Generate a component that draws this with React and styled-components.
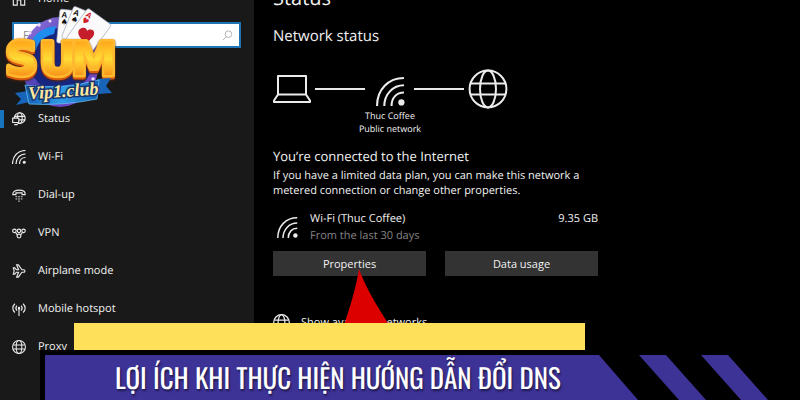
import React from 'react'
import styled, { createGlobalStyle } from 'styled-components'

const GlobalStyle = createGlobalStyle`
  * { box-sizing: border-box; }
  body {
    margin: 0;
    background: #000;
    color: #f2f2f2;
    font: 11px/16px "Open Sans", "Noto Sans", sans-serif;
    text-rendering: geometricPrecision;
  }
`

const Screen = styled.div`
  position: relative;
  height: 100vh;
  overflow: hidden;
`

// both columns are scrolled down by one nav row
const Columns = styled.div`
  display: flex;
  min-height: calc(100% + 20px);
  margin-top: -20px;
`

const Sidebar = styled.nav`
  flex: 0 0 254px;
  background: #191919;
`

const NavLink = styled.a`
  display: flex;
  align-items: center;
  gap: 12px;
  height: 38px;
  padding-left: 12px;
  color: #f2f2f2;
  text-decoration: none;

  &::before {
    content: '';
    width: 4px;
    height: 18px;
    margin-left: -12px;
    margin-right: -4px;
    background: ${({ $active }) => ($active ? '#1a73bd' : 'transparent')};
  }
`

const SearchBox = styled.label`
  display: flex;
  align-items: center;
  height: 26px;
  margin: 4px 13px 52px 12px;
  padding: 0 6px 0 9px;
  background: #fff;
  border: 2px solid #1f74b5;
`

const SearchInput = styled.input`
  flex: 1;
  min-width: 0;
  padding: 0;
  border: 0;
  outline: 0;
  background: none;
  font: inherit;
  color: #222;

  &::placeholder { color: #888; }
`

const Main = styled.main`
  flex: 1;
  min-width: 0;
  padding: 0 19px;
`

const Content = styled.div`
  max-width: 325px;
`

const PageTitle = styled.h1`
  margin: 0;
  padding-top: 4px;
  font-size: 20px;
  font-weight: 400;
  line-height: 28px;
`

const Heading = styled.h2`
  margin: 14px 0 0;
  font-size: 15px;
  font-weight: 400;
  line-height: 20px;
`

const Diagram = styled.div`
  display: flex;
  align-items: center;
  gap: 4px;
  height: 40px;
  margin-top: 23px;
`

const Link = styled.span`
  width: 50px;
  height: 2px;
  background: #e8e8e8;
`

const DiagramWifi = styled.span`
  display: flex;
  padding: 4px 5px 0 7px;
`

const Caption = styled.p`
  width: 234px;
  margin: 0;
  font-size: 9px;
  line-height: 13px;
  text-align: center;
`

const SubHeading = styled.h3`
  margin: 11px 0 0;
  font-size: 13px;
  font-weight: 400;
  line-height: 20px;
`

const Note = styled.p`
  margin: 2px -12px 0 0;
  line-height: 15px;
`

const Usage = styled.div`
  display: flex;
  align-items: center;
  gap: 12px;
  margin-top: 12px;
  padding-left: 4px;
  line-height: 17px;
`

const UsageText = styled.div`
  flex: 1;
`

const Muted = styled.div`
  color: #858585;
`

const Amount = styled.div`
  align-self: flex-start;
`

const Actions = styled.div`
  display: grid;
  grid-template-columns: 1fr 1fr;
  gap: 19px;
  margin-top: 7px;
`

const Action = styled.div`
  position: relative;
`

const Button = styled.button`
  width: 100%;
  height: 25px;
  padding: 0;
  border: 0;
  background: #333;
  color: #f2f2f2;
  font: inherit;
`

const Pointer = styled.svg`
  position: absolute;
  z-index: 1;
  top: 18px;
  left: 66px;
`

const NetworksLink = styled.a`
  display: flex;
  align-items: center;
  gap: 11px;
  margin-top: 38px;
  color: #f2f2f2;
  text-decoration: none;
`

const Logo = styled.svg`
  position: absolute;
  top: 4px;
  left: 0;
`

const LogoLetters = styled.g`
  font: 700 46px "DejaVu Sans", sans-serif;
  fill: url(#gold);
  stroke: #ffb92e;
  stroke-width: 5px;
  stroke-linejoin: round;
  paint-order: stroke;
  filter: drop-shadow(0 2px 0 #d9590f) drop-shadow(0 1px 1px #57230c);
`

const LogoScript = styled.text`
  font: italic 700 18px "Liberation Serif", serif;
  fill: #ffe9a0;
  stroke: #16356f;
  stroke-width: 3px;
  paint-order: stroke;
`

const Banner = styled.div`
  position: absolute;
  z-index: 2;
  left: 40px;
  right: 0;
  bottom: 0;
`

const YellowBar = styled.div`
  height: 27px;
  margin: 0 215px 0 34px;
  background: #ffe05a;
`

const BannerRow = styled.div`
  display: flex;
  gap: 1px;
  height: 50px;
  padding: 5px 32px 0 5px;
  background: #000;
`

const BannerTitle = styled.h2`
  flex: 1;
  margin: 0;
  padding-left: 70px;
  background: #3d3296;
  clip-path: polygon(0 0, calc(100% - 39px) 0, 100% 100%, 0 100%);
  color: #fff;
  font: 400 27px/44px Oswald, "Liberation Sans Narrow", sans-serif;
  text-shadow: 1px 2px 2px rgba(0, 0, 0, 0.5);
  white-space: nowrap;
`

const Stripe = styled.div`
  width: 67px;
  background: #3d3296;
  clip-path: polygon(0 0, 27px 0, 100% 100%, 40px 100%);

  & + & { margin-left: -6px; }
`

const Icon = ({ size = 14, box = 16, stroke = 1.3, children }) => (
  <svg width={size} height={size} viewBox={`0 0 ${box} ${box}`} fill="none" stroke="#ececec" strokeWidth={stroke} aria-hidden="true">
    {children}
  </svg>
)

const Globe = ({ size, stroke }) => (
  <Icon size={size} box={40} stroke={stroke}>
    <circle cx="20" cy="20" r="18.4" />
    <ellipse cx="20" cy="20" rx="8" ry="18.4" />
    <path d="M3 14.5h34M3 25.5h34" />
  </Icon>
)

const Wifi = ({ size, stroke = 2 }) => (
  <Icon size={size} box={28} stroke={stroke}>
    <path d="M1 28C1 12 12 1 27 1M8 28C8 17 16 8 27 8M15 28C15 20 20 15 27 15" />
    <circle cx="24.500" cy="24.500" r="3" fill="#ececec" stroke="none" />
  </Icon>
)

const Laptop = () => (
  <svg width="38" height="30" viewBox="0 0 38 30" fill="none" stroke="#ececec" strokeWidth="2" strokeLinejoin="round" aria-hidden="true">
    <path d="M5 2h28v18.500H5zM5 20.500L1 26.500v1.500h36v-1.500l-4-6" />
  </svg>
)

const HomeIcon = () => (
  <Icon>
    <path d="M1.500 6L8 1l6.500 5v9H10V9H6v6H1.500z" />
  </Icon>
)

const StatusIcon = () => (
  <Icon>
    <circle cx="8.800" cy="7" r="6.200" />
    <ellipse cx="8.800" cy="7" rx="2.800" ry="6.200" />
    <path d="M3 5h12M3 9h12" />
    <path d="M.8 7h7v5h-7zM2.500 14.500h4" fill="#191919" />
  </Icon>
)

const DialIcon = () => (
  <Icon>
    <path d="M1 6.500C1 1 15 1 15 6.500v1h-3.500V5.500h-7v2H1z" />
    <path d="M4 10h2M7 10h2M10 10h2M4 12.500h2M7 12.500h2M10 12.500h2M7 15h2" strokeWidth="1" />
  </Icon>
)

const VpnIcon = () => (
  <Icon>
    <circle cx="2.800" cy="5.500" r="2" />
    <circle cx="8" cy="5.500" r="2" />
    <circle cx="13.200" cy="5.500" r="2" />
    <circle cx="8" cy="11.500" r="2.200" />
    <path d="M4 7.300L6 10M12 7.300L10 10" />
  </Icon>
)

const PlaneIcon = () => (
  <Icon>
    <path d="M1.500 4.500h1.700L5 6.600h2.500L5.300 1h2l4 5.600h2.200c1.700 0 1.700 2.800 0 2.800h-2.200L7.300 15h-2l2.200-5.600H5l-1.800 2.100H1.500L2.500 8z" />
  </Icon>
)

const HotspotIcon = () => (
  <Icon>
    <path d="M3.300 2C.2 5 .2 9 3.300 12M12.700 2c3.100 3 3.100 7 0 10M5.600 4.200C4 6 4 8 5.600 9.800M10.400 4.200C12 6 12 8 10.400 9.800M8 7v9" />
    <circle cx="8" cy="7" r=".8" />
  </Icon>
)

const SearchIcon = () => (
  <svg width="11" height="11" viewBox="0 0 11 11" fill="none" stroke="#b5b5b5" aria-hidden="true">
    <circle cx="6.500" cy="4.200" r="3.300" />
    <path d="M4.200 6.800L.8 10.200" />
  </svg>
)

const Card = ({ x, y, angle, width = 22, height = 34, suit, color = '#111' }) => (
  <g transform={`translate(${x} ${y}) rotate(${angle})`} fill={color}>
    <rect width={width} height={height} rx="2" fill="#fafafa" stroke="#9a9fb5" strokeWidth=".6" />
    <text x="2" y="8" fontFamily="Liberation Sans, sans-serif" fontWeight="700" fontSize="8">A</text>
    <text x="2" y="15" fontFamily="DejaVu Sans, sans-serif" fontSize="8">{suit}</text>
  </g>
)

const SiteLogo = () => (
  <Logo width="120" height="106" viewBox="0 4 120 106" role="img" aria-label="SUM Vip1.club">
    <defs>
      <linearGradient id="gold" x1="0" y1="0" x2="0" y2="1">
        <stop offset="0.200" stopColor="#ffab1c" />
        <stop offset="0.500" stopColor="#ffdc35" />
        <stop offset="0.800" stopColor="#f9961a" />
      </linearGradient>
      <linearGradient id="disc" x1="0" y1="0" x2="1" y2="1">
        <stop offset="0" stopColor="#9a7be0" />
        <stop offset="0.500" stopColor="#4b3cb4" />
        <stop offset="1" stopColor="#8a4fd0" />
      </linearGradient>
      <linearGradient id="ribbon" x1="0" y1="0" x2="1" y2="0">
        <stop offset="0" stopColor="#1560b4" />
        <stop offset="0.500" stopColor="#2f9be6" />
        <stop offset="1" stopColor="#1560b4" />
      </linearGradient>
    </defs>
    <ellipse cx="60" cy="62" rx="39" ry="45" fill="url(#disc)" />
    <circle cx="61" cy="60" r="32" fill="#16257f" />
    <path d="M29 50C31 36 40 28 56 26l-2 8C44 36 38 42 36 50z" fill="#1f8df0" />
    <g fill="#f3dcff">
      <circle cx="30" cy="33" r="1.500" />
      <circle cx="39" cy="25" r="1.700" />
      <circle cx="50" cy="21" r="1.500" />
      <circle cx="93" cy="79" r="1.700" />
      <circle cx="83" cy="100" r="1.300" />
    </g>
    <Card x={60} y={9} angle={6} suit="♠" />
    <Card x={74} y={6} angle={22} suit="♠" />
    <Card x={88} y={8} angle={36} width={29} height={38} suit="♥" color="#d21f2c" />
    <path d="M86 43C76 36 77 29 82 28c3-1 5 1 5 3 2-2 6-2 7 1 1 4-3 7-8 11z" fill="#c51d2a" />
    <LogoLetters>
      <text x="5" y="75">S</text>
      <text x="39" y="75">U</text>
      <text x="71" y="75">M</text>
    </LogoLetters>
    <path d="M15 93l13-2 2 11-14 3 5-6zM97 79l14-1-5 8 6 7-14 1z" fill="#1764b8" />
    <path d="M25 85q36 5 74-5l-2 19q-34 7-68 5z" fill="url(#ribbon)" stroke="#6cc7f8" strokeWidth=".7" />
    <LogoScript x="28" y="97" transform="rotate(-4 62 92)">Vip1.club</LogoScript>
  </Logo>
)

const navItems = [
  { label: 'Status', icon: <StatusIcon />, active: true },
  { label: 'Wi-Fi', icon: <Wifi size={14} stroke={2.4} /> },
  { label: 'Dial-up', icon: <DialIcon /> },
  { label: 'VPN', icon: <VpnIcon /> },
  { label: 'Airplane mode', icon: <PlaneIcon /> },
  { label: 'Mobile hotspot', icon: <HotspotIcon /> },
  { label: 'Proxy', icon: <Globe size={14} stroke={3} /> },
]

const App = () => (
  <Screen>
    <GlobalStyle />
    <Columns>
      <Sidebar>
        <NavLink href="#home"><HomeIcon />Home</NavLink>
        <SearchBox>
          <SearchInput type="text" placeholder="Find a setting" aria-label="Find a setting" />
          <SearchIcon />
        </SearchBox>
        {navItems.map(({ label, icon, active }) => (
          <NavLink key={label} href={`#${label}`} $active={active}>{icon}{label}</NavLink>
        ))}
      </Sidebar>
      <Main>
        <Content>
          <PageTitle>Status</PageTitle>
          <Heading>Network status</Heading>
          <Diagram>
            <Laptop />
            <Link />
            <DiagramWifi><Wifi size={29} /></DiagramWifi>
            <Link />
            <Globe size={40} stroke={2} />
          </Diagram>
          <Caption>Thuc Coffee<br />Public network</Caption>
          <SubHeading>You’re connected to the Internet</SubHeading>
          <Note>If you have a limited data plan, you can make this network a metered connection or change other properties.</Note>
          <Usage>
            <Wifi size={21} />
            <UsageText>
              Wi-Fi (Thuc Coffee)
              <Muted>From the last 30 days</Muted>
            </UsageText>
            <Amount>9.35 GB</Amount>
          </Usage>
          <Actions>
            <Action>
              <Button type="button">Properties</Button>
              <Pointer width="60" height="84" viewBox="0 0 60 84" aria-hidden="true">
                <path d="M20 0Q16 26 0 70H60Q30 28 20 0z" fill="#dc0000" />
              </Pointer>
            </Action>
            <Button type="button">Data usage</Button>
          </Actions>
          <NetworksLink href="#networks"><Globe size={17} stroke={3} />Show available networks</NetworksLink>
        </Content>
      </Main>
    </Columns>
    <SiteLogo />
    <Banner>
      <YellowBar />
      <BannerRow>
        <BannerTitle>LỢI ÍCH KHI THỰC HIỆN HƯỚNG DẪN ĐỔI DNS</BannerTitle>
        <Stripe />
        <Stripe />
      </BannerRow>
    </Banner>
  </Screen>
)

export default App
